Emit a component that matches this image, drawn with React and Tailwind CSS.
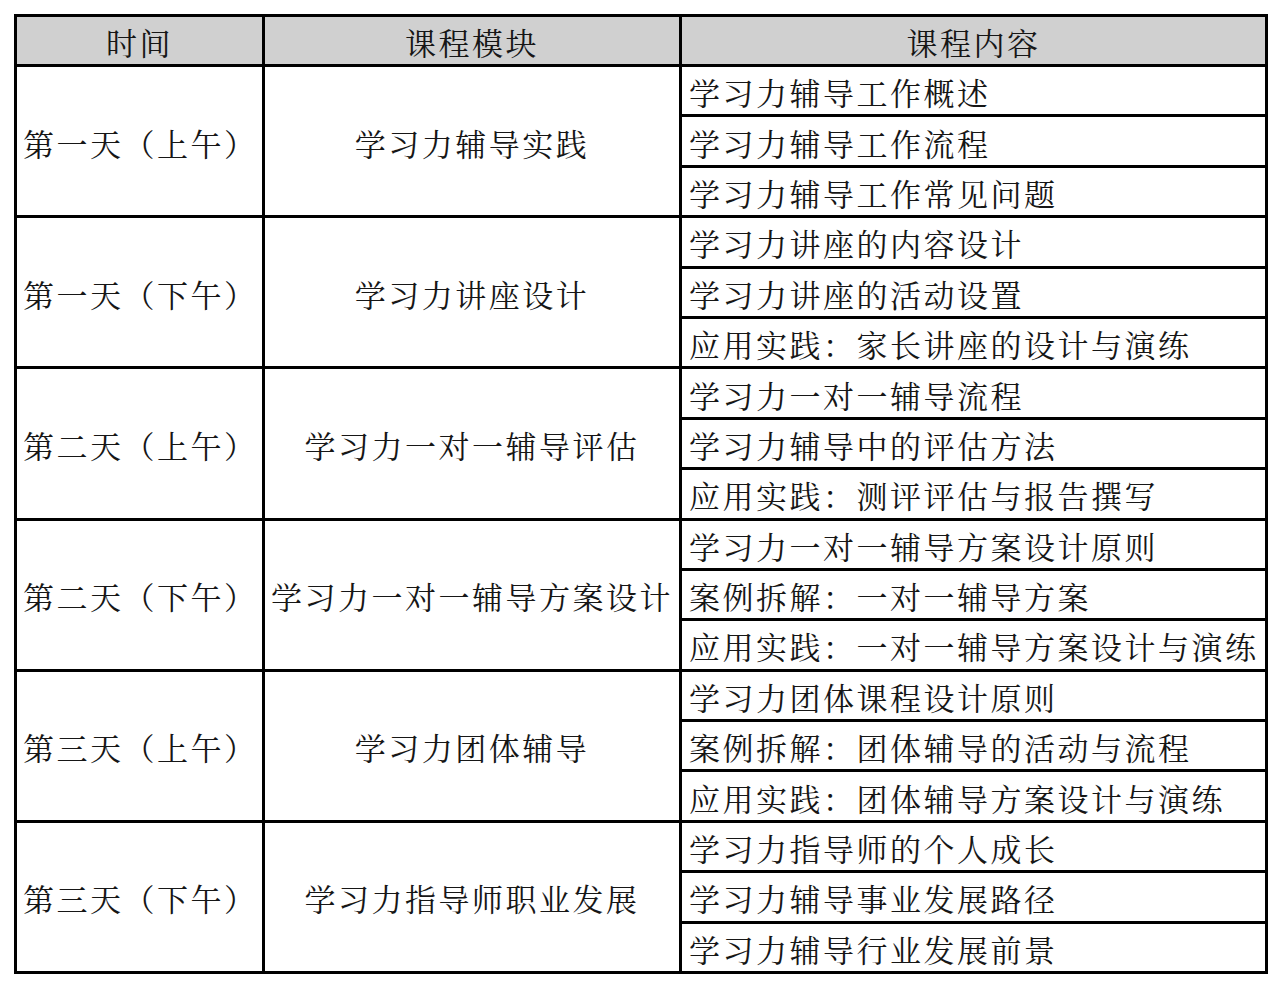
import React from 'react'

const schedule = [
  {
    time: '第一天（上午）',
    module: '学习力辅导实践',
    items: ['学习力辅导工作概述', '学习力辅导工作流程', '学习力辅导工作常见问题'],
  },
  {
    time: '第一天（下午）',
    module: '学习力讲座设计',
    items: ['学习力讲座的内容设计', '学习力讲座的活动设置', '应用实践：家长讲座的设计与演练'],
  },
  {
    time: '第二天（上午）',
    module: '学习力一对一辅导评估',
    items: ['学习力一对一辅导流程', '学习力辅导中的评估方法', '应用实践：测评评估与报告撰写'],
  },
  {
    time: '第二天（下午）',
    module: '学习力一对一辅导方案设计',
    items: ['学习力一对一辅导方案设计原则', '案例拆解：一对一辅导方案', '应用实践：一对一辅导方案设计与演练'],
  },
  {
    time: '第三天（上午）',
    module: '学习力团体辅导',
    items: ['学习力团体课程设计原则', '案例拆解：团体辅导的活动与流程', '应用实践：团体辅导方案设计与演练'],
  },
  {
    time: '第三天（下午）',
    module: '学习力指导师职业发展',
    items: ['学习力指导师的个人成长', '学习力辅导事业发展路径', '学习力辅导行业发展前景'],
  },
]

const font = { fontFamily: '"Noto Serif CJK SC", "Noto Sans CJK SC", "Noto Sans", sans-serif' }

export default function App() {
  return (
    <div className="w-[1280px] h-[988px] bg-white pt-[14px] pl-[14px]" style={font}>
      <table className="w-[1251px] border-collapse border-[3px] border-black text-[31px] tracking-[2.5px] text-[#161616] leading-none table-fixed">
        <colgroup>
          <col className="w-[248px]" />
          <col className="w-[417px]" />
          <col className="w-[586px]" />
        </colgroup>
        <thead>
          <tr className="h-[50px] bg-[#d0d0d0]">
            <th className="border-[3px] border-black font-normal text-center pt-[2px]">时间</th>
            <th className="border-[3px] border-black font-normal text-center pt-[2px]">课程模块</th>
            <th className="border-[3px] border-black font-normal text-center pt-[2px]">课程内容</th>
          </tr>
        </thead>
        <tbody>
          {schedule.map((s) =>
            s.items.map((item, i) => (
              <tr key={s.time + i} className="h-[50.4px]">
                {i === 0 && (
                  <td rowSpan={3} className="border-[3px] border-black pl-[6px] pt-[2px] text-left whitespace-nowrap">
                    {s.time}
                  </td>
                )}
                {i === 0 && (
                  <td rowSpan={3} className="border-[3px] border-black text-center whitespace-nowrap px-0 pt-[2px]">
                    {s.module}
                  </td>
                )}
                <td className="border-[3px] border-black pl-[7px] pt-[2px] text-left whitespace-nowrap">{item}</td>
              </tr>
            ))
          )}
        </tbody>
      </table>
    </div>
  )
}
